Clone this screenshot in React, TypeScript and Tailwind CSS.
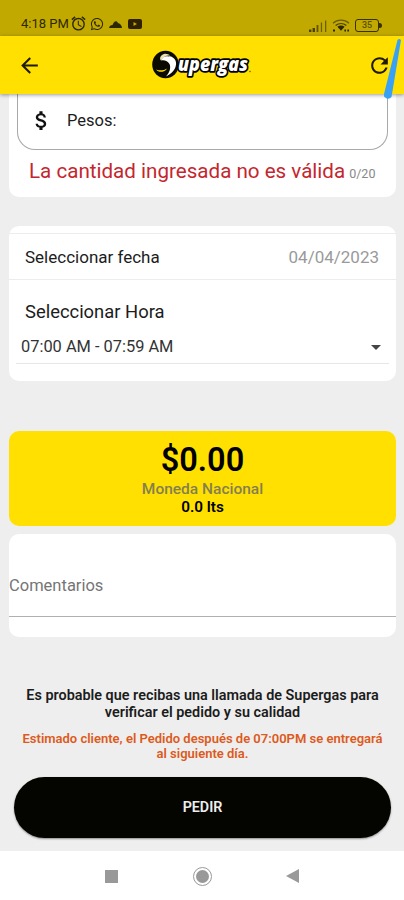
import { useState } from 'react'
import { FaWhatsapp } from 'react-icons/fa'
import { MdAlarm, MdArrowBack, MdArrowDropDown, MdAttachMoney, MdRefresh } from 'react-icons/md'

function SignalIcon() {
  return (
    <svg width="18" height="12" viewBox="0 0 18 12" fill="#4a4000">
      <rect x="0" y="9.5" width="2.4" height="2.5" />
      <rect x="3.6" y="8" width="2.4" height="4" />
      <rect x="7.6" y="5" width="1.8" height="7" opacity="0.8" />
      <rect x="11.8" y="2.5" width="1.3" height="9.5" opacity="0.7" />
      <rect x="16" y="0.5" width="1.3" height="11.5" opacity="0.7" />
    </svg>
  )
}

function WifiIcon() {
  return (
    <svg width="18" height="13" viewBox="0 0 18 13" fill="none" stroke="#6b5e00" strokeWidth="1.3">
      <path d="M1 4.2C5.5.2 12.5.2 17 4.2" />
      <path d="M3.6 6.6c3.2-2.7 7.6-2.7 10.8 0" stroke="#4a4000" />
      <path d="M5.4 7.8c2-1.6 5.2-1.6 7.2 0L9 11.8Z" fill="#2e2800" stroke="none" />
      <path d="M1 11.5h2M12.4 11.5h1.6M15.3 11.5h1.7" stroke="#2e2800" strokeWidth="2" />
    </svg>
  )
}

function Battery({ level }: { level: number }) {
  return (
    <div className="flex items-center">
      <div className="flex h-[13px] w-[24px] items-center justify-center rounded-[3px] border-[1.5px] border-[#3a3200] text-[9px] font-medium leading-none text-[#5e5200]">
        {level}
      </div>
      <div className="h-[5px] w-[3px] rounded-r-sm bg-[#3a3200]" />
    </div>
  )
}

function Logo() {
  return (
    <svg className="overflow-visible" width="101" height="32" viewBox="0 0 101 32">
      <ellipse cx="14.500" cy="15.500" rx="13.300" ry="13.800" fill="#0a0a00" />
      <path d="M5 20.500c2.500 3.500 9 3 11-1-3 2-7 2.500-11 1Z" fill="#ffe000" />
      <path
        d="M10 11.500C11 8 14.500 6.500 17.500 7.500c2-.8 5.500 1 7 4 2 5-1 12-9.500 16 4-4.500 5-9 3.500-12.500C17 12 13 10.500 10 11.500Z"
        fill="#fff"
      />
      <path d="M10 11.500C8 9.500 9.500 6 13 5c2.500-.5 5 .5 6 1.500-3-.5-7 1-9 5Z" fill="#e8e4b0" />
      <text
        x="27"
        y="22"
        textLength="70"
        lengthAdjust="spacingAndGlyphs"
        fontFamily="'Open Sans', sans-serif"
        fontSize="20"
        fontWeight="800"
        fontStyle="italic"
        fill="#fff"
        stroke="#000"
        strokeWidth="3.600"
        strokeLinejoin="round"
        paintOrder="stroke"
      >
        upergas
      </text>
      <circle cx="99" cy="22.500" r="0.8" fill="#6b5e00" />
    </svg>
  )
}

function StatusBar() {
  return (
    <div className="flex h-9 items-end bg-[#c1a900] pb-[4px] pl-[21px] pr-[22px] text-[#2e2800]">
      <div className="flex flex-1 items-center">
        <span className="text-[13px] leading-4">4:18 PM</span>
        <MdAlarm className="ml-[1px]" size={17} />
        <FaWhatsapp className="ml-[3px]" size={14} />
        <svg className="ml-[5px]" width="13" height="8" viewBox="0 0 13 8">
          <path d="M0 8c.5-2 1.500-3 3.500-3C5 1 7.500 0 9 3c2.500.5 4 3 4 5Z" fill="#2e2800" />
        </svg>
        <svg className="ml-[6px]" width="14" height="10" viewBox="0 0 14 10">
          <rect width="14" height="10" rx="2" fill="#2e2000" />
          <path d="M5.500 3v4l3.500-2Z" fill="#c1a900" />
        </svg>
      </div>
      <div className="flex items-center gap-[5px]">
        <SignalIcon />
        <WifiIcon />
        <Battery level={35} />
      </div>
    </div>
  )
}

function AppBar() {
  return (
    <header className="relative z-10 flex h-[58px] items-center justify-between bg-[#ffe000] pl-[17px] pr-[12px] shadow-[0_1px_4px_rgba(0,0,0,0.4)]">
      <button type="button" aria-label="Volver">
        <MdArrowBack size={25} color="#1f1b00" />
      </button>
      <div className="mr-[6px]">
        <Logo />
      </div>
      <button type="button" aria-label="Actualizar">
        <MdRefresh size={25} color="#1f1b00" />
      </button>
      <svg className="absolute right-0 top-[2px]" width="20" height="62" viewBox="0 0 20 62">
        <path d="M13.500 2Q15 0 17 2L7.500 59Q4 63-.5 58Z" fill="#38a0f5" />
      </svg>
    </header>
  )
}

export default function App() {
  const [comments, setComments] = useState('')

  return (
    <div className="flex h-[900px] w-[404px] flex-col overflow-hidden bg-[#eeeeee] font-['Roboto',sans-serif] text-[#1c1c1c]">
      <StatusBar />
      <AppBar />

      <main className="flex flex-1 flex-col pl-[9px] pr-[8px]">
        <section className="h-[103px] rounded-b-[10px] bg-white px-2">
          <div className="flex h-[56px] items-center rounded-b-[18px] border border-t-0 border-[#a8a8a8] pb-[3px] pl-[11px]">
            <MdAttachMoney size={25} color="#111" />
            <span className="ml-[13px] pt-[2px] text-[16.5px]">Pesos:</span>
          </div>
          <div className="flex items-baseline pl-[12px] pt-[6px]">
            <span className="whitespace-nowrap text-[20.6px] leading-[30px] text-[#c4262e]">
              La cantidad ingresada no es válida
            </span>
            <span className="ml-[4px] text-[12.5px] text-[#888]">0/20</span>
          </div>
        </section>

        <section className="mt-[29px] h-[155px] rounded-[10px] bg-white pt-[7px]">
          <div className="flex h-[47px] items-center justify-between border-y border-[#ececec] pl-[16px] pr-[17px] pt-[2px]">
            <span className="text-[17px]">Seleccionar fecha</span>
            <span className="text-[17px] text-[#9a9a9a]">04/04/2023</span>
          </div>
          <p className="pl-[16px] pt-[20px] text-[18.4px] leading-6">Seleccionar Hora</p>
          <div className="mx-[7px] mt-[6px] flex h-[34px] items-center justify-between border-b border-[#e6e6e6] pl-[5px]">
            <span className="pt-[2px] text-[16.4px] text-[#333]">07:00 AM - 07:59 AM</span>
            <MdArrowDropDown size={24} className="mr-[1px]" color="#444" />
          </div>
        </section>

        <section className="mt-[50px] flex h-[95px] flex-col items-center rounded-[10px] bg-[#ffe000] pt-[10px]">
          <span className="text-[32.5px] font-semibold leading-[39px] text-black">$0.00</span>
          <span className="text-[15.5px] font-medium leading-[18px] text-[#857f50]">Moneda Nacional</span>
          <span className="text-[15.3px] font-semibold leading-[18px] text-black">0.0 lts</span>
        </section>

        <section className="mt-[8px] h-[103px] rounded-[10px] bg-white pt-[20px]">
          <input
            value={comments}
            onChange={(e) => setComments(e.target.value)}
            placeholder="Comentarios"
            className="h-[63px] w-full border-b border-[#b0b0b0] pt-[1px] text-[16.5px] placeholder:text-[#757575]"
          />
        </section>

        <p className="mt-[51px] text-center text-[14.4px] font-semibold leading-[16.5px]">
          Es probable que recibas una llamada de Supergas para
          <br />
          verificar el pedido y su calidad
        </p>
        <p className="mt-[10px] text-center text-[13px] font-semibold leading-[15px] text-[#dd5a1c]">
          Estimado cliente, el Pedido después de 07:00PM se entregará
          <br />
          al siguiente día.
        </p>

        <button
          type="button"
          className="mx-[5px] mt-[16px] h-[61px] rounded-full bg-[#050500] pt-[1px] text-[14.3px] font-semibold text-[#eee] shadow-[0_1px_2px_rgba(0,0,0,0.4)]"
        >
          PEDIR
        </button>
      </main>

      <nav className="flex h-[49px] items-center bg-white pl-[105px] pt-[1px]">
        <div className="h-[13px] w-[13px] bg-[#999]" />
        <div className="ml-[75px] flex h-[19px] w-[19px] items-center justify-center rounded-full border border-[#999]">
          <div className="h-[13px] w-[13px] rounded-full bg-[#999]" />
        </div>
        <svg className="ml-[74px]" width="13" height="14" viewBox="0 0 13 14">
          <path d="M0 7 13 0v14Z" fill="#999" />
        </svg>
      </nav>
    </div>
  )
}
